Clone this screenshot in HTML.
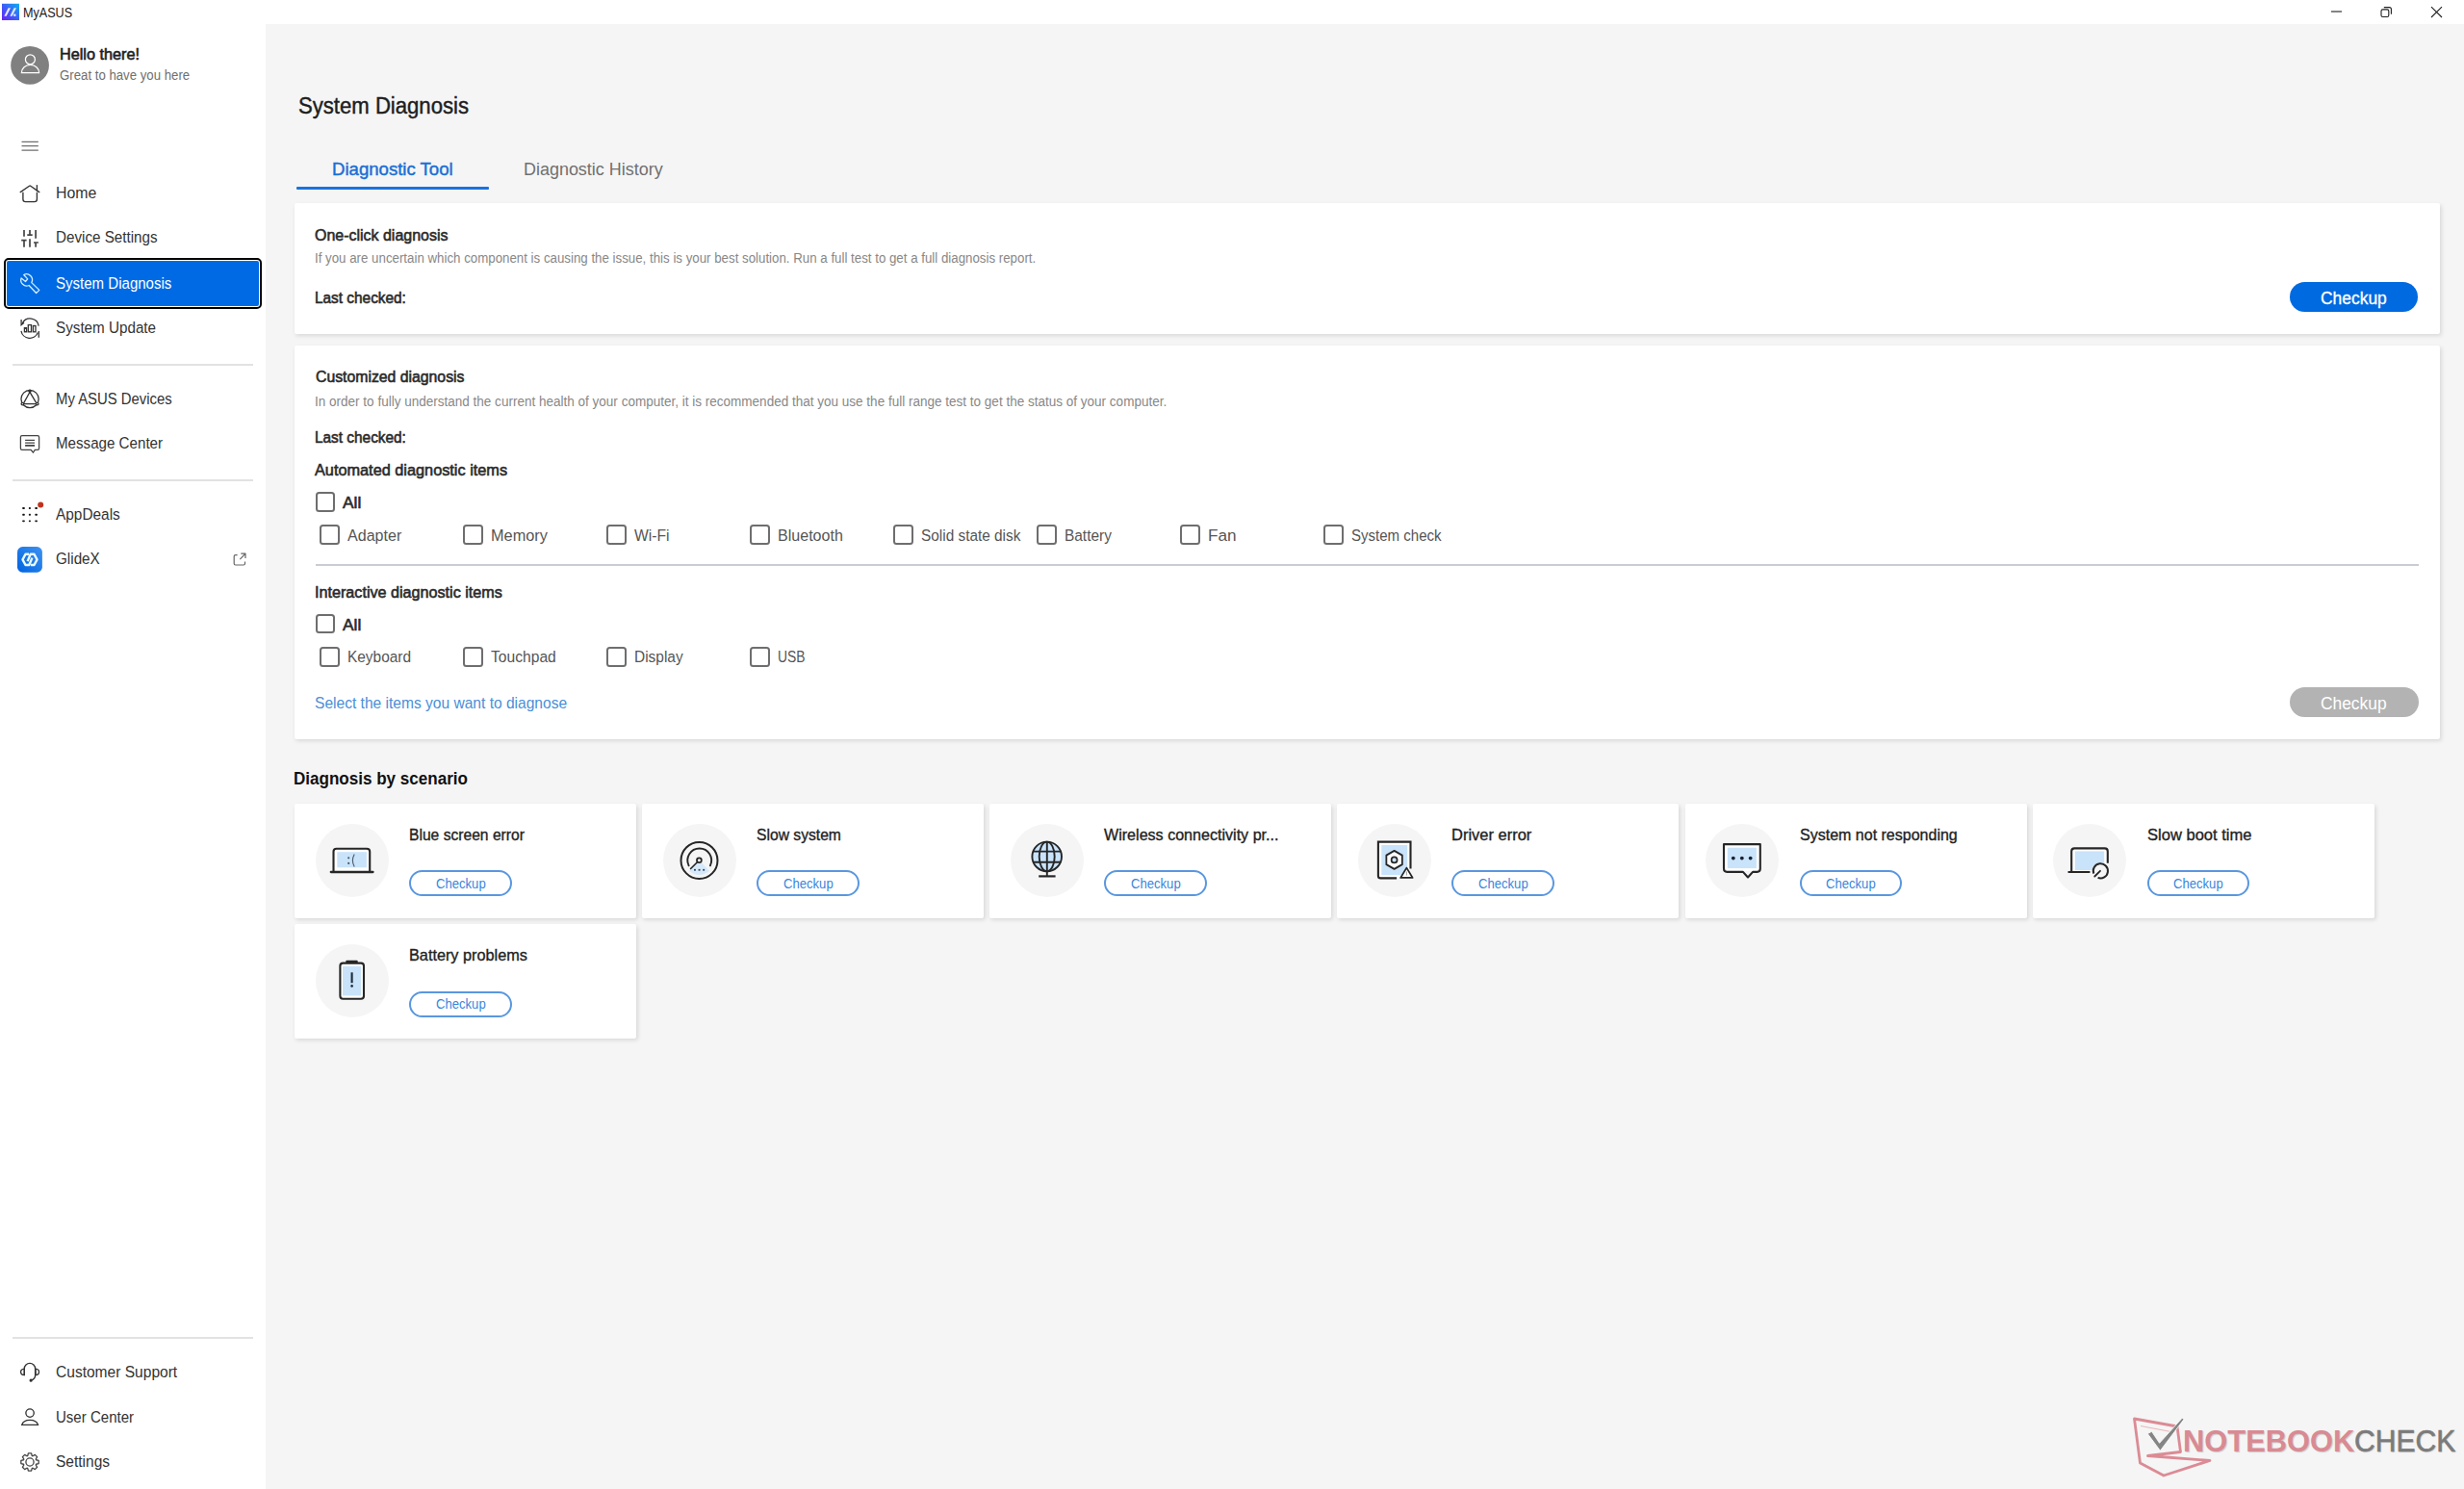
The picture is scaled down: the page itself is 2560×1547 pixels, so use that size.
<!DOCTYPE html><html><head><meta charset="utf-8"><style>
*{margin:0;padding:0;box-sizing:border-box}
html,body{width:2560px;height:1547px;overflow:hidden}
body{position:relative;background:#f5f5f5;font-family:"Liberation Sans",sans-serif;}
.t{position:absolute;white-space:nowrap;transform-origin:0 0;}
.abs{position:absolute}
.card{position:absolute;background:#fff;border-radius:2px;box-shadow:1.5px 2px 4px rgba(0,0,0,0.11)}
.cb{position:absolute;width:20.5px;height:20.5px;border:2px solid #6e6e6e;border-radius:3.5px;background:#fff}
.sep{position:absolute;height:2px;background:#e2e2e2}
.circ{position:absolute;width:76px;height:76px;border-radius:50%;background:#f5f5f5}
.obtn{position:absolute;width:106.6px;height:27px;border:2px solid #5a97e0;border-radius:14px;background:#fff}
svg{position:absolute;overflow:visible}
</style></head><body>

<div class="abs" style="left:0;top:0;width:2560px;height:25px;background:#fff"></div>
<div class="abs" style="left:0;top:25px;width:276px;height:1522px;background:#fff"></div>
<div class="card" style="left:306px;top:210.5px;width:2228.5px;height:136.5px"></div>
<div class="card" style="left:306px;top:359px;width:2228.5px;height:409px"></div>
<div class="card" style="left:306.2px;top:834.5px;width:355px;height:119.7px"></div>
<div class="circ" style="left:327.6px;top:855.5px"></div>
<div class="obtn" style="left:425.2px;top:904.4px"></div>
<div class="card" style="left:667.3px;top:834.5px;width:355px;height:119.7px"></div>
<div class="circ" style="left:688.7px;top:855.5px"></div>
<div class="obtn" style="left:786.3px;top:904.4px"></div>
<div class="card" style="left:1028.4px;top:834.5px;width:355px;height:119.7px"></div>
<div class="circ" style="left:1049.8px;top:855.5px"></div>
<div class="obtn" style="left:1147.4px;top:904.4px"></div>
<div class="card" style="left:1389.4px;top:834.5px;width:355px;height:119.7px"></div>
<div class="circ" style="left:1410.8px;top:855.5px"></div>
<div class="obtn" style="left:1508.4px;top:904.4px"></div>
<div class="card" style="left:1750.5px;top:834.5px;width:355px;height:119.7px"></div>
<div class="circ" style="left:1771.9px;top:855.5px"></div>
<div class="obtn" style="left:1869.5px;top:904.4px"></div>
<div class="card" style="left:2111.6px;top:834.5px;width:355px;height:119.7px"></div>
<div class="circ" style="left:2133.0px;top:855.5px"></div>
<div class="obtn" style="left:2230.6px;top:904.4px"></div>
<div class="card" style="left:306.2px;top:959.6px;width:355px;height:119.7px"></div>
<div class="circ" style="left:327.6px;top:980.6px"></div>
<div class="obtn" style="left:425.2px;top:1029.5px"></div>
<div class="abs" style="left:3.7px;top:268.4px;width:268.5px;height:52.8px;border:2.6px solid #000;border-radius:5px;background:#fff;padding:1px"><div style="width:100%;height:100%;background:#006ae4;border-radius:2px"></div></div>
<div class="sep" style="left:13px;top:377.5px;width:250px"></div>
<div class="sep" style="left:13px;top:497.5px;width:250px"></div>
<div class="sep" style="left:13px;top:1388.5px;width:250px"></div>
<div class="abs" style="left:308px;top:193.5px;width:199.5px;height:3px;background:#1a73e0;border-radius:1px"></div>
<div class="abs" style="left:328px;top:586px;width:2184.5px;height:2px;background:#c8ccd3"></div>
<div class="abs" style="left:2378.7px;top:293px;width:133.3px;height:31.4px;border-radius:16px;background:#006ae0"></div>
<div class="abs" style="left:2379px;top:714.4px;width:133.5px;height:31px;border-radius:16px;background:#b3b3b3"></div>
<div class="cb" style="left:327.7px;top:511.2px"></div>
<div class="cb" style="left:327.7px;top:637.8px"></div>
<div class="cb" style="left:332.0px;top:545.2px"></div>
<div class="cb" style="left:481.0px;top:545.2px"></div>
<div class="cb" style="left:630.0px;top:545.2px"></div>
<div class="cb" style="left:779.0px;top:545.2px"></div>
<div class="cb" style="left:928.0px;top:545.2px"></div>
<div class="cb" style="left:1077.0px;top:545.2px"></div>
<div class="cb" style="left:1226.0px;top:545.2px"></div>
<div class="cb" style="left:1375.0px;top:545.2px"></div>
<div class="cb" style="left:332.0px;top:672.2px"></div>
<div class="cb" style="left:481.0px;top:672.2px"></div>
<div class="cb" style="left:630.0px;top:672.2px"></div>
<div class="cb" style="left:779.0px;top:672.2px"></div>
<svg width="2560" height="1547" viewBox="0 0 2560 1547" style="left:0;top:0">
<defs>
<linearGradient id="lg1" x1="0" y1="1" x2="1" y2="0"><stop offset="0" stop-color="#6a1ff5"/><stop offset="0.5" stop-color="#3d5ff7"/><stop offset="1" stop-color="#08b0f0"/></linearGradient>
<linearGradient id="lg2" x1="0" y1="1" x2="1" y2="0"><stop offset="0" stop-color="#0063e0"/><stop offset="1" stop-color="#3d92f2"/></linearGradient>
</defs>
<!-- title bar logo -->
<rect x="2" y="3.8" width="18" height="17.2" fill="url(#lg1)"/>
<path d="M4.3 16.8 L8.6 8.2 L11 8.2 L6.7 16.8 Z" fill="#e6e6ff"/>
<path d="M10.3 16.8 L14.6 8.2 L17 8.2 L12.7 16.8 Z" fill="#d6ecff"/>
<rect x="14.2" y="14.6" width="2.2" height="2.2" fill="#e0f4ff"/>
<!-- window controls -->
<g stroke="#1f1f1f" stroke-width="1.1" fill="none">
<path d="M2421.9 12 H2433"/>
<rect x="2474" y="9.9" width="7.8" height="7.6" rx="1.6"/>
<path d="M2476.8 7.6 H2482.4 Q2484.4 7.6 2484.4 9.6 V14.8"/>
<path d="M2526 7.2 L2537 18 M2537 7.2 L2526 18"/>
</g>
<!-- avatar -->
<circle cx="31.05" cy="67.8" r="19.9" fill="#808080"/>
<g stroke="#fff" stroke-width="1.25" fill="none">
<circle cx="31.4" cy="61.75" r="5"/>
<path d="M22.4 75.6 A9.1 8.2 0 0 1 40.6 75.6 Z"/>
</g>
<!-- hamburger -->
<g stroke="#6f6f6f" stroke-width="1.3"><path d="M22.5 147.4 H39.8 M22.5 151.7 H39.8 M22.5 156.2 H39.8"/></g>
<!-- sidebar icons -->
<g stroke="#333" stroke-width="1.35" fill="none" stroke-linecap="round" stroke-linejoin="round">
<path d="M21.2 199.6 L30.4 193.3 Q31.1 192.8 31.8 193.3 L40.8 199.6"/>
<path d="M38.4 192.6 V198.1"/>
<path d="M23.9 200.2 V207 Q23.9 209.6 26.5 209.6 H35.8 Q38.4 209.6 38.4 207 V200.2"/>
</g>
<g stroke="#444" stroke-width="1.7" fill="none">
<path d="M25 239 V245.7 M22.2 249.6 H27.6 M25 249.6 V256.8"/>
<path d="M31 239 V244 M28.3 244.2 H33.7 M31 248.3 V256.8"/>
<path d="M37.1 239 V247.7 M35 252 H39.9 M37.1 252 V256.8"/>
</g>
<path d="M24.7 285.5 L28.7 289.9 L26.5 292.5 L22.1 288.9 A6 6 0 0 0 30.1 296.5 L37.6 304.5 L40.8 301.4 L32.8 293.6 A6 6 0 0 0 24.7 285.5 Z" stroke="#d2eeff" stroke-width="1.3" fill="none" stroke-linejoin="round"/>
<g stroke="#333" stroke-width="1.3" fill="none">
<path d="M23.2 336 A9 9 0 0 1 40.2 338.6"/>
<path d="M22.1 332 V337.6 L25 335.2"/>
<path d="M22 343.8 A9 9 0 0 0 39.3 345.5"/>
<path d="M40.3 344 V350.8"/>
<rect x="25.4" y="340.6" width="2.2" height="4.2"/>
<rect x="29.3" y="337.6" width="3.2" height="7.2"/>
<rect x="34.4" y="338.5" width="2.6" height="6.3"/>
</g>
<g stroke="#333" stroke-width="1.3" fill="none">
<circle cx="31.05" cy="414.6" r="9.1"/>
<path d="M31 407.3 L24.2 419.6 H38.3 Z"/>
<circle cx="31" cy="406.3" r="1.1" fill="#333"/>
<circle cx="23.4" cy="419.6" r="1.3" fill="#fff"/>
<circle cx="38.7" cy="419.6" r="1.3" fill="#fff"/>
</g>
<g stroke="#444" stroke-width="1.3" fill="none" stroke-linejoin="round">
<path d="M22.9 452.7 H39.1 Q40.6 452.7 40.6 454.2 V465.8 Q40.6 467.4 39.1 467.4 H36.3 L34.4 470.2 L32.2 467.4 H22.9 Q21.4 467.4 21.4 465.8 V454.2 Q21.4 452.7 22.9 452.7 Z"/>
<path d="M26.1 457.4 H36 M26.1 460.2 H36"/>
<path d="M26.1 462.9 H36" stroke-width="1.8"/>
</g>
<g fill="#151515">
<rect x="23.2" y="527.1" width="2.6" height="1.8" rx="0.6"/><rect x="29.9" y="527.1" width="2" height="1.8" rx="0.6"/><rect x="36.3" y="527.1" width="2.6" height="1.8" rx="0.6"/>
<rect x="23.2" y="533.7" width="2.6" height="2" rx="0.8"/><rect x="29.9" y="533.7" width="2" height="2" rx="0.6"/><rect x="36.3" y="533.7" width="2.6" height="2" rx="0.8"/>
<rect x="23.2" y="540.4" width="2.6" height="1.8" rx="0.6"/><rect x="29.9" y="540.4" width="2" height="1.8" rx="0.6"/><rect x="36.3" y="540.4" width="2.6" height="1.8" rx="0.6"/>
</g>
<circle cx="42.2" cy="524.6" r="3" fill="#c0331b"/>
<rect x="18" y="568.1" width="25.9" height="26.6" rx="5.5" fill="url(#lg2)"/>
<g stroke="#e8fbff" stroke-width="2.4" fill="none" stroke-linejoin="round" stroke-linecap="butt">
<path d="M30 575.7 H26.5 L23.5 581.35 L26.5 587 H30.3 L33.4 579.6"/>
<path d="M32 587 H35.5 L38.5 581.35 L35.5 575.7 H31.7 L28.6 583.1"/>
</g>
<g stroke="#666" stroke-width="1.2" fill="none" stroke-linejoin="round">
<path d="M246.6 576.6 H244.7 Q243.2 576.6 243.2 578.1 V585.5 Q243.2 587 244.7 587 H253 Q254.5 587 254.5 585.5 V583.4"/>
<path d="M249.3 581.1 L255 575.2 M250.3 575.1 H255 V580"/>
</g>
<g stroke="#333" stroke-width="1.35" fill="none" stroke-linejoin="round">
<path d="M25.3 1428.7 V1422 A5.65 5.6 0 0 1 36.6 1422 V1429 Q36.6 1432.8 32.1 1434.2"/>
<path d="M25.3 1422.2 Q21.6 1422.6 21.6 1425.4 Q21.6 1428.4 25.3 1428.7 Z"/>
<path d="M37 1422.2 Q40.5 1422.6 40.5 1425.4 Q40.5 1428.4 37 1428.7 Z"/>
<circle cx="32.1" cy="1434.2" r="0.9" fill="#222"/>
</g>
<g stroke="#333" stroke-width="1.35" fill="none">
<circle cx="31.07" cy="1468.1" r="4.2"/>
<path d="M22.7 1480.4 A8.6 6.4 0 0 1 39.5 1480.4 Z"/>
</g>
<path id="gear" stroke="#444" stroke-width="1.3" fill="none" stroke-linejoin="round" d="M28.75 1512.48 L29.39 1509.84 L32.61 1509.84 L33.25 1512.48 L34.02 1512.80 L36.33 1511.38 L38.62 1513.67 L37.20 1515.98 L37.52 1516.75 L40.16 1517.39 L40.16 1520.61 L37.52 1521.25 L37.20 1522.02 L38.62 1524.33 L36.33 1526.62 L34.02 1525.20 L33.25 1525.52 L32.61 1528.16 L29.39 1528.16 L28.75 1525.52 L27.98 1525.20 L25.67 1526.62 L23.38 1524.33 L24.80 1522.02 L24.48 1521.25 L21.84 1520.61 L21.84 1517.39 L24.48 1516.75 L24.80 1515.98 L23.38 1513.67 L25.67 1511.38 L27.98 1512.80 Z"/>
<circle cx="31" cy="1519" r="4.1" stroke="#444" stroke-width="1.3" fill="none"/>
<rect x="347.5" y="882.7" width="35.7" height="22.3" fill="#fff"/>
<rect x="350.3" y="885.2" width="30.6" height="16.1" fill="#c9e3fa"/>
<path d="M346.5 905.8 V884.8 Q346.5 881.7 349.6 881.7 H381.1 Q384.2 881.7 384.2 884.8 V905.8" stroke="#262626" stroke-width="2.1" fill="none"/>
<path d="M343.8 906 H387.5" stroke="#262626" stroke-width="2.3" stroke-linecap="round"/>
<circle cx="362.2" cy="891.3" r="1.1" fill="#4a5a6a"/><circle cx="362.2" cy="896.9" r="1.1" fill="#4a5a6a"/>
<path d="M368.2 887.4 Q364.6 894 368.2 900.4" stroke="#4a5a6a" stroke-width="1.1" fill="none"/>
<path d="M726.5 893.8 L716 905 Q726.5 913 737 905 Z" fill="#cfe6fb" opacity="0.85"/>
<circle cx="726.5" cy="893.9" r="19" stroke="#262626" stroke-width="2" fill="none"/>
<path d="M715.6 899.3 A12.4 12.4 0 1 1 737.9 899.3" stroke="#262626" stroke-width="1.9" fill="none" stroke-linecap="round"/>
<circle cx="726.4" cy="893.8" r="2.4" stroke="#262626" stroke-width="1.8" fill="#fff"/>
<path d="M724.7 895.5 L717.6 902.5" stroke="#262626" stroke-width="1.7" stroke-linecap="round"/>
<g fill="#3a4a5c"><rect x="721" y="902.9" width="1.9" height="1.8"/><rect x="725.6" y="902.9" width="1.9" height="1.8"/><rect x="730.2" y="902.9" width="1.9" height="1.8"/></g>
<circle cx="1087.7" cy="889.9" r="15.4" fill="#c9e3fa"/>
<g stroke="#262626" stroke-width="1.9" fill="none"><circle cx="1087.7" cy="889.9" r="15.3"/><ellipse cx="1087.7" cy="889.9" rx="8" ry="15.3"/><path d="M1087.8 874.6 V910.4 M1073.2 884.6 H1102.2 M1073.2 895.7 H1102.2"/><path d="M1079.2 910.4 H1096.6" stroke-width="2.2"/></g>
<rect x="1432.9" y="875.6" width="31.6" height="35.8" fill="#fff"/>
<rect x="1435.3" y="878" width="26.9" height="31.2" fill="#c9e3fa"/>
<path d="M1451.1 912.4 H1434.4 Q1431.9 912.4 1431.9 909.9 V874.65 H1465.5 V902.5" stroke="#262626" stroke-width="2.1" fill="none"/>
<path d="M1448.60 883.90 L1456.83 888.65 L1456.83 898.15 L1448.60 902.90 L1440.37 898.15 L1440.37 888.65 Z" stroke="#262626" stroke-width="1.8" fill="#fff" stroke-linejoin="round"/>
<circle cx="1448.6" cy="893.4" r="3" stroke="#262626" stroke-width="1.7" fill="#c9e3fa"/>
<path d="M1461.4 901.6 L1467.6 911.9 H1455.2 Z" stroke="#262626" stroke-width="1.8" fill="#fff" stroke-linejoin="round"/>
<path d="M1461.4 905.5 V909.5" stroke="#888" stroke-width="0.8"/>
<rect x="1792" y="878.1" width="35.8" height="26.8" fill="#fff"/>
<rect x="1794.8" y="880.7" width="30.1" height="21.4" fill="#c9e3fa"/>
<path d="M1791 877.1 H1828.8 V902.6 Q1828.8 905.85 1825.6 905.85 H1821.1 L1816 911.5 L1810.9 905.85 H1794.2 Q1791 905.85 1791 902.6 Z" stroke="#262626" stroke-width="2.1" fill="none" stroke-linejoin="round"/>
<g fill="#172230"><circle cx="1800.8" cy="891.6" r="1.9"/><circle cx="1809.8" cy="891.6" r="1.9"/><circle cx="1818.65" cy="891.6" r="1.9"/></g>
<rect x="2153.2" y="882.4" width="35.6" height="22.6" fill="#fff"/>
<rect x="2155.8" y="884.4" width="30.4" height="19.6" fill="#c9e3fa"/>
<path d="M2152.2 906 V884.5 Q2152.2 881.4 2155.3 881.4 H2186.7 Q2189.8 881.4 2189.8 884.5 V896.8" stroke="#262626" stroke-width="2.1" fill="none"/>
<path d="M2149.4 906 H2170.6" stroke="#262626" stroke-width="2.2" stroke-linecap="round"/>
<circle cx="2182.3" cy="904.7" r="8.6" fill="#f5f5f5"/>
<path d="M2175.3 907.6 A7.6 7.6 0 1 1 2179.6 911.9" stroke="#262626" stroke-width="2" fill="none"/>
<path d="M2182 904.8 L2176.3 910.5" stroke="#262626" stroke-width="1.8" stroke-linecap="round"/>
<rect x="354.4" y="1001.6" width="22.6" height="35.1" rx="2" fill="#fff"/>
<rect x="356" y="1003.9" width="19.2" height="30.5" fill="#c9e3fa"/>
<rect x="353.4" y="1000.6" width="24.6" height="37.1" rx="3" stroke="#262626" stroke-width="2.1" fill="none"/>
<path d="M360.4 999 H370.6" stroke="#262626" stroke-width="2.4" stroke-linecap="round"/>
<path d="M365.6 1010.3 V1021.2" stroke="#1c2a38" stroke-width="2.1"/><circle cx="365.6" cy="1024.4" r="1.3" fill="#1c2a38"/>
<g opacity="1">
<path d="M2217.5 1474 L2262 1482 L2265.5 1508.5 L2231.5 1512.5 L2296 1517.5 L2248 1533 L2223.5 1520 Z" fill="none" stroke="#db8b95" stroke-width="2.8" stroke-linejoin="round"/>
<path d="M2224 1481.5 L2258 1488" fill="none" stroke="#e9b5bb" stroke-width="1"/>
<path d="M2231.3 1489.6 L2235.6 1487.3 L2243.6 1499.3 L2267.2 1473.2 L2269 1474.6 L2244.4 1507.2 Z" fill="#858585" stroke="#fff" stroke-width="0.8" stroke-linejoin="round"/>
</g>
</svg>

<div class="t" style="left:24.37px;top:7.00px;font-size:13.77px;line-height:13.77px;font-weight:400;color:#222;transform:scaleX(0.9157);">MyASUS</div>
<div class="t" style="left:61.89px;top:49.00px;font-size:15.94px;line-height:15.94px;font-weight:400;color:#1e1e1e;transform:scaleX(1.0190);-webkit-text-stroke:0.6px #1e1e1e;">Hello there!</div>
<div class="t" style="left:62.04px;top:71.00px;font-size:14.49px;line-height:14.49px;font-weight:400;color:#707070;transform:scaleX(0.9125);">Great to have you here</div>
<div class="t" style="left:57.71px;top:193.00px;font-size:16.67px;line-height:16.67px;font-weight:400;color:#333;transform:scaleX(0.9526);">Home</div>
<div class="t" style="left:57.74px;top:239.00px;font-size:16.67px;line-height:16.67px;font-weight:400;color:#333;transform:scaleX(0.9122);">Device Settings</div>
<div class="t" style="left:57.75px;top:287.00px;font-size:16.67px;line-height:16.67px;font-weight:400;color:#ffffff;transform:scaleX(0.9028);">System Diagnosis</div>
<div class="t" style="left:57.74px;top:333.00px;font-size:16.67px;line-height:16.67px;font-weight:400;color:#333;transform:scaleX(0.9139);">System Update</div>
<div class="t" style="left:57.76px;top:407.00px;font-size:16.67px;line-height:16.67px;font-weight:400;color:#333;transform:scaleX(0.8934);">My ASUS Devices</div>
<div class="t" style="left:57.74px;top:453.00px;font-size:16.67px;line-height:16.67px;font-weight:400;color:#333;transform:scaleX(0.9087);">Message Center</div>
<div class="t" style="left:57.73px;top:527.00px;font-size:16.67px;line-height:16.67px;font-weight:400;color:#333;transform:scaleX(0.9246);">AppDeals</div>
<div class="t" style="left:57.74px;top:573.00px;font-size:16.67px;line-height:16.67px;font-weight:400;color:#333;transform:scaleX(0.9155);">GlideX</div>
<div class="t" style="left:57.72px;top:1418.00px;font-size:16.67px;line-height:16.67px;font-weight:400;color:#333;transform:scaleX(0.9336);">Customer Support</div>
<div class="t" style="left:57.75px;top:1465.00px;font-size:16.67px;line-height:16.67px;font-weight:400;color:#333;transform:scaleX(0.9026);">User Center</div>
<div class="t" style="left:57.72px;top:1511.00px;font-size:16.67px;line-height:16.67px;font-weight:400;color:#333;transform:scaleX(0.9321);">Settings</div>
<div class="t" style="left:309.89px;top:98.00px;font-size:24.06px;line-height:24.06px;font-weight:400;color:#1e1e1e;transform:scaleX(0.9197);-webkit-text-stroke:0.45px #1e1e1e;">System Diagnosis</div>
<div class="t" style="left:345.07px;top:166.00px;font-size:18.99px;line-height:18.99px;font-weight:400;color:#1a6fd6;transform:scaleX(0.9787);-webkit-text-stroke:0.45px #1a6fd6;">Diagnostic Tool</div>
<div class="t" style="left:544.10px;top:166.00px;font-size:18.99px;line-height:18.99px;font-weight:400;color:#707070;transform:scaleX(0.9453);">Diagnostic History</div>
<div class="t" style="left:326.90px;top:237.00px;font-size:16.96px;line-height:16.96px;font-weight:400;color:#2a2a2a;transform:scaleX(0.9427);-webkit-text-stroke:0.6px #2a2a2a;">One-click diagnosis</div>
<div class="t" style="left:327.04px;top:260.00px;font-size:15.22px;line-height:15.22px;font-weight:400;color:#888;transform:scaleX(0.8734);">If you are uncertain which component is causing the issue, this is your best solution. Run a full test to get a full diagnosis report.</div>
<div class="t" style="left:326.93px;top:302.00px;font-size:16.67px;line-height:16.67px;font-weight:400;color:#2a2a2a;transform:scaleX(0.9232);-webkit-text-stroke:0.6px #2a2a2a;">Last checked:</div>
<div class="t" style="left:2410.93px;top:301.00px;font-size:18.12px;line-height:18.12px;font-weight:400;color:#fff;transform:scaleX(0.9620);-webkit-text-stroke:0.3px #fff;">Checkup</div>
<div class="t" style="left:327.51px;top:383.00px;font-size:16.38px;line-height:16.38px;font-weight:400;color:#2a2a2a;transform:scaleX(0.9649);-webkit-text-stroke:0.6px #2a2a2a;">Customized diagnosis</div>
<div class="t" style="left:327.02px;top:409.00px;font-size:15.22px;line-height:15.22px;font-weight:400;color:#888;transform:scaleX(0.8883);">In order to fully understand the current health of your computer, it is recommended that you use the full range test to get the status of your computer.</div>
<div class="t" style="left:326.93px;top:447.00px;font-size:16.67px;line-height:16.67px;font-weight:400;color:#2a2a2a;transform:scaleX(0.9232);-webkit-text-stroke:0.6px #2a2a2a;">Last checked:</div>
<div class="t" style="left:327.48px;top:481.00px;font-size:16.96px;line-height:16.96px;font-weight:400;color:#2a2a2a;transform:scaleX(0.9615);-webkit-text-stroke:0.6px #2a2a2a;">Automated diagnostic items</div>
<div class="t" style="left:356.13px;top:515.00px;font-size:16.52px;line-height:16.52px;font-weight:400;color:#2a2a2a;transform:scaleX(1.0490);-webkit-text-stroke:0.6px #2a2a2a;">All</div>
<div class="t" style="left:360.60px;top:549.00px;font-size:16.52px;line-height:16.52px;font-weight:400;color:#555;transform:scaleX(0.9721);">Adapter</div>
<div class="t" style="left:509.58px;top:549.00px;font-size:16.52px;line-height:16.52px;font-weight:400;color:#555;transform:scaleX(0.9868);">Memory</div>
<div class="t" style="left:658.61px;top:549.00px;font-size:16.52px;line-height:16.52px;font-weight:400;color:#555;transform:scaleX(0.9506);">Wi-Fi</div>
<div class="t" style="left:807.60px;top:549.00px;font-size:16.52px;line-height:16.52px;font-weight:400;color:#555;transform:scaleX(0.9720);">Bluetooth</div>
<div class="t" style="left:956.63px;top:549.00px;font-size:16.52px;line-height:16.52px;font-weight:400;color:#555;transform:scaleX(0.9307);">Solid state disk</div>
<div class="t" style="left:1105.63px;top:549.00px;font-size:16.52px;line-height:16.52px;font-weight:400;color:#555;transform:scaleX(0.9343);">Battery</div>
<div class="t" style="left:1254.54px;top:549.00px;font-size:16.52px;line-height:16.52px;font-weight:400;color:#555;transform:scaleX(1.0377);">Fan</div>
<div class="t" style="left:1403.65px;top:549.00px;font-size:16.52px;line-height:16.52px;font-weight:400;color:#555;transform:scaleX(0.9101);">System check</div>
<div class="t" style="left:327.49px;top:608.00px;font-size:16.67px;line-height:16.67px;font-weight:400;color:#2a2a2a;transform:scaleX(0.9699);-webkit-text-stroke:0.6px #2a2a2a;">Interactive diagnostic items</div>
<div class="t" style="left:356.13px;top:642.00px;font-size:16.52px;line-height:16.52px;font-weight:400;color:#2a2a2a;transform:scaleX(1.0490);-webkit-text-stroke:0.6px #2a2a2a;">All</div>
<div class="t" style="left:360.63px;top:675.00px;font-size:16.52px;line-height:16.52px;font-weight:400;color:#555;transform:scaleX(0.9333);">Keyboard</div>
<div class="t" style="left:509.62px;top:675.00px;font-size:16.52px;line-height:16.52px;font-weight:400;color:#555;transform:scaleX(0.9465);">Touchpad</div>
<div class="t" style="left:658.63px;top:675.00px;font-size:16.52px;line-height:16.52px;font-weight:400;color:#555;transform:scaleX(0.9360);">Display</div>
<div class="t" style="left:807.71px;top:675.00px;font-size:16.52px;line-height:16.52px;font-weight:400;color:#555;transform:scaleX(0.8405);">USB</div>
<div class="t" style="left:327.22px;top:722.00px;font-size:16.38px;line-height:16.38px;font-weight:400;color:#4a8fd8;transform:scaleX(0.9512);">Select the items you want to diagnose</div>
<div class="t" style="left:2411.13px;top:722.00px;font-size:18.26px;line-height:18.26px;font-weight:400;color:#fff;transform:scaleX(0.9519);">Checkup</div>
<div class="t" style="left:304.55px;top:801.00px;font-size:17.68px;line-height:17.68px;font-weight:700;color:#111;transform:scaleX(0.9645);">Diagnosis by scenario</div>
<div class="t" style="left:425.22px;top:859.00px;font-size:17.39px;line-height:17.39px;font-weight:400;color:#222;transform:scaleX(0.8998);-webkit-text-stroke:0.35px #222;">Blue screen error</div>
<div class="t" style="left:452.94px;top:911.00px;font-size:14.2px;line-height:14.2px;font-weight:400;color:#3a86dc;transform:scaleX(0.9228);">Checkup</div>
<div class="t" style="left:786.30px;top:859.00px;font-size:17.39px;line-height:17.39px;font-weight:400;color:#222;transform:scaleX(0.9015);-webkit-text-stroke:0.35px #222;">Slow system</div>
<div class="t" style="left:814.02px;top:911.00px;font-size:14.2px;line-height:14.2px;font-weight:400;color:#3a86dc;transform:scaleX(0.9228);">Checkup</div>
<div class="t" style="left:1147.36px;top:859.00px;font-size:17.39px;line-height:17.39px;font-weight:400;color:#222;transform:scaleX(0.9257);-webkit-text-stroke:0.35px #222;">Wireless connectivity pr...</div>
<div class="t" style="left:1175.10px;top:911.00px;font-size:14.2px;line-height:14.2px;font-weight:400;color:#3a86dc;transform:scaleX(0.9228);">Checkup</div>
<div class="t" style="left:1508.42px;top:859.00px;font-size:17.39px;line-height:17.39px;font-weight:400;color:#222;transform:scaleX(0.9481);-webkit-text-stroke:0.35px #222;">Driver error</div>
<div class="t" style="left:1536.18px;top:911.00px;font-size:14.2px;line-height:14.2px;font-weight:400;color:#3a86dc;transform:scaleX(0.9228);">Checkup</div>
<div class="t" style="left:1869.52px;top:859.00px;font-size:17.39px;line-height:17.39px;font-weight:400;color:#222;transform:scaleX(0.9214);-webkit-text-stroke:0.35px #222;">System not responding</div>
<div class="t" style="left:1897.26px;top:911.00px;font-size:14.2px;line-height:14.2px;font-weight:400;color:#3a86dc;transform:scaleX(0.9228);">Checkup</div>
<div class="t" style="left:2230.57px;top:859.00px;font-size:17.39px;line-height:17.39px;font-weight:400;color:#222;transform:scaleX(0.9519);-webkit-text-stroke:0.35px #222;">Slow boot time</div>
<div class="t" style="left:2258.34px;top:911.00px;font-size:14.2px;line-height:14.2px;font-weight:400;color:#3a86dc;transform:scaleX(0.9228);">Checkup</div>
<div class="t" style="left:425.19px;top:984.00px;font-size:17.39px;line-height:17.39px;font-weight:400;color:#222;transform:scaleX(0.9354);-webkit-text-stroke:0.35px #222;">Battery problems</div>
<div class="t" style="left:452.94px;top:1036.00px;font-size:14.2px;line-height:14.2px;font-weight:400;color:#3a86dc;transform:scaleX(0.9228);">Checkup</div>
<div class="t" style="left:2268.46px;top:1482.00px;font-size:31.74px;line-height:31.74px;font-weight:700;color:#d98a93;transform:scaleX(0.9723);text-shadow:1px 1px 1px rgba(0,0,0,0.18);">NOTEBOOK</div>
<div class="t" style="left:2446.00px;top:1482.00px;font-size:31.74px;line-height:31.74px;font-weight:400;color:#7b7b7b;transform:scaleX(0.9470);-webkit-text-stroke:0.6px #7b7b7b;text-shadow:1px 1px 1px rgba(0,0,0,0.18);">CHECK</div>
</body></html>
